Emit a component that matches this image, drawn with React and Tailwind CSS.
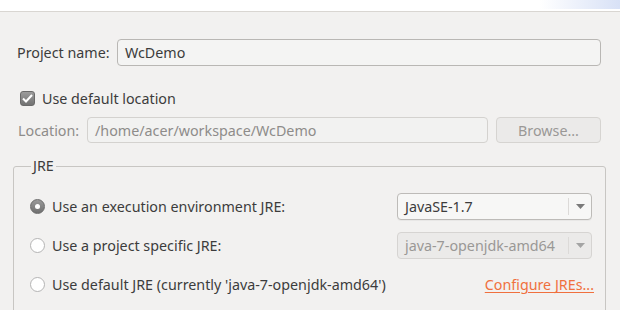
import React from "react";

const font = { fontFamily: "'Noto Sans', 'DejaVu Sans', sans-serif" };

const Radio = ({ checked }) => (
  <span
    className={
      "flex h-[15px] w-[15px] shrink-0 items-center justify-center rounded-full border " +
      (checked
        ? "border-[#6b6b6b] bg-gradient-to-b from-[#9a9a9a] to-[#707070]"
        : "border-[#b4b4b4] bg-white")
    }
  >
    {checked && <span className="h-[5px] w-[5px] rounded-full bg-white" />}
  </span>
);

const Select = ({ value, disabled }) => (
  <div
    className={
      "flex h-[27px] w-[195px] items-center rounded-[4px] border " +
      (disabled
        ? "border-[#d6d4d2] bg-[#ebeae9] text-[#9a9896]"
        : "border-[#bdbbb8] bg-[#f7f7f6] text-[#3c3c3c] shadow-[0_1px_0_rgba(0,0,0,0.04)]")
    }
  >
    <span className="flex-1 truncate pl-[7px]">{value}</span>
    <span className="h-[17px] w-px bg-[#dcdad8]" />
    <span className="flex w-[22px] justify-center">
      <svg width="9" height="5" viewBox="0 0 9 5">
        <path d="M0 0h9L4.5 5z" fill={disabled ? "#a4a4a4" : "#7a7a7a"} />
      </svg>
    </span>
  </div>
);

export default function App() {
  return (
    <div
      className="flex h-[310px] w-[620px] flex-col overflow-hidden bg-[#f2f1f0] text-[14.3px] text-[#3c3c3c]"
      style={font}
    >
      <div className="relative h-[12px] shrink-0 border-b border-[#d9d6d2] bg-white">
        <div className="absolute right-0 top-0 h-[9px] w-[80px] bg-gradient-to-r from-white to-[#d8e1f6]" />
      </div>

      <div className="flex flex-col px-[13px] pt-[27px]">
        <div className="flex items-center">
          <span className="w-[104px] pl-[4px]">Project name:</span>
          <div className="mr-[6px] flex h-[27px] flex-1 items-center rounded-[4px] border border-[#b9b7b4] bg-[#f4f4f3] pl-[7px]">
            WcDemo
          </div>
        </div>

        <div className="mt-[22px] flex items-center gap-[7px] pl-[7px]">
          <span className="flex h-[15px] w-[15px] items-center justify-center rounded-[3px] border border-[#6a6a6a] bg-gradient-to-b from-[#9c9c9c] to-[#727272]">
            <svg width="11" height="9" viewBox="0 0 11 9">
              <path d="M1 4.5l3 3L10 1" stroke="white" strokeWidth="2" fill="none" />
            </svg>
          </span>
          <span>Use default location</span>
        </div>

        <div className="mt-[8px] flex items-center">
          <span className="w-[74px] pl-[5px] text-[#8e8c8a]">Location:</span>
          <div className="flex h-[26px] w-[401px] items-center rounded-[4px] border border-[#d4d2cf] bg-[#f2f2f1] pl-[7px] text-[#8e8c8a]">
            /home/acer/workspace/WcDemo
          </div>
          <div className="ml-[8px] flex h-[26px] w-[105px] items-center justify-center rounded-[4px] border border-[#d6d4d1] bg-[#ebeae9] text-[#9a9896]">
            Browse...
          </div>
        </div>

        <fieldset className="mr-[1px] mt-[16px] h-[200px] rounded-[3px] border border-[#c8c6c3] pl-[16px] pr-[13px] pt-[22px]">
          <legend className="-mb-[2px] ml-[1px] px-[2px] leading-[14px]">JRE</legend>
          <div className="flex h-[27px] items-center">
            <div className="flex flex-1 items-center gap-[7px]">
              <Radio checked />
              <span>Use an execution environment JRE:</span>
            </div>
            <Select value="JavaSE-1.7" />
          </div>
          <div className="mt-[12px] flex h-[27px] items-center">
            <div className="flex flex-1 items-center gap-[7px]">
              <Radio />
              <span>Use a project specific JRE:</span>
            </div>
            <Select value="java-7-openjdk-amd64" disabled />
          </div>
          <div className="mt-[12px] flex h-[27px] items-center">
            <div className="flex flex-1 items-center gap-[7px]">
              <Radio />
              <span>Use default JRE (currently 'java-7-openjdk-amd64')</span>
            </div>
            <span className="mr-[-2px] text-[#f0703e] underline underline-offset-2">Configure JREs...</span>
          </div>
        </fieldset>
      </div>
    </div>
  );
}
